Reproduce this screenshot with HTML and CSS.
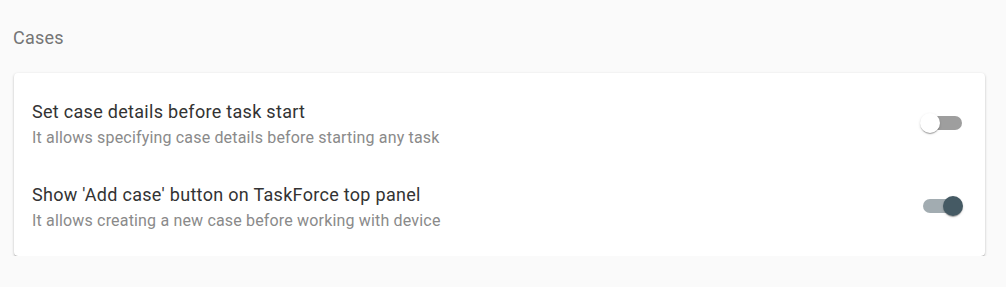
FILE: index.html
```html
<!DOCTYPE html>
<html>
<head>
<meta charset="utf-8">
<link rel="stylesheet" href="styles.css">
</head>
<body>
<div class="page">
  <h2 class="section-title">Cases</h2>
  <div class="card">
    <div class="row">
      <div class="text">
        <div class="primary">Set case details before task start</div>
        <div class="secondary">It allows specifying case details before starting any task</div>
      </div>
      <span class="switch"><span class="track"></span><span class="thumb"></span></span>
    </div>
    <div class="row">
      <div class="text">
        <div class="primary">Show 'Add case' button on TaskForce top panel</div>
        <div class="secondary">It allows creating a new case before working with device</div>
      </div>
      <span class="switch on"><span class="track"></span><span class="thumb"></span></span>
    </div>
  </div>
</div>
</body>
</html>
```
FILE: styles.css
```css
html, body {
  margin: 0;
  padding: 0;
  background: #fafafa;
  font-family: Roboto, "Liberation Sans", sans-serif;
}
.page {
  padding: 26px 21px 0 14px;
}
.section-title {
  margin: 0 0 23px -1px;
  font-size: 18px;
  font-weight: 400;
  line-height: 24px;
  letter-spacing: 0.2px;
  color: #757575;
}
.card {
  background: #fff;
  border-radius: 4px;
  box-shadow: 0 1px 3px rgba(0,0,0,0.2), 0 1px 1px rgba(0,0,0,0.14), 0 2px 1px -1px rgba(0,0,0,0.12);
  padding: 9px 0 8px;
}
.row {
  display: flex;
  align-items: center;
  height: 83px;
  padding: 0 20px 0 18px;
}
.text {
  flex: 1;
}
.primary {
  font-size: 18px;
  line-height: 24px;
  letter-spacing: 0.3px;
  color: #333;
}
.secondary {
  font-size: 16px;
  line-height: 20px;
  letter-spacing: 0.17px;
  color: #8a8a8a;
  margin-top: 4px;
}
.switch {
  position: relative;
  width: 45px;
  height: 20px;
  margin-top: -1px;
  flex: none;
}
.track {
  position: absolute;
  left: 3px;
  top: 3px;
  width: 39px;
  height: 14px;
  border-radius: 7px;
  background: #9e9e9e;
}
.thumb {
  position: absolute;
  left: 0;
  top: 0;
  width: 20px;
  height: 20px;
  border-radius: 50%;
  background: #fff;
  box-shadow: 0 2px 1px -1px rgba(0,0,0,0.2), 0 1px 1px rgba(0,0,0,0.14), 0 1px 3px rgba(0,0,0,0.12);
}
.switch.on .track {
  background: #a2acb1;
}
.switch.on .thumb {
  left: 23px;
  background: #455a64;
}
```
